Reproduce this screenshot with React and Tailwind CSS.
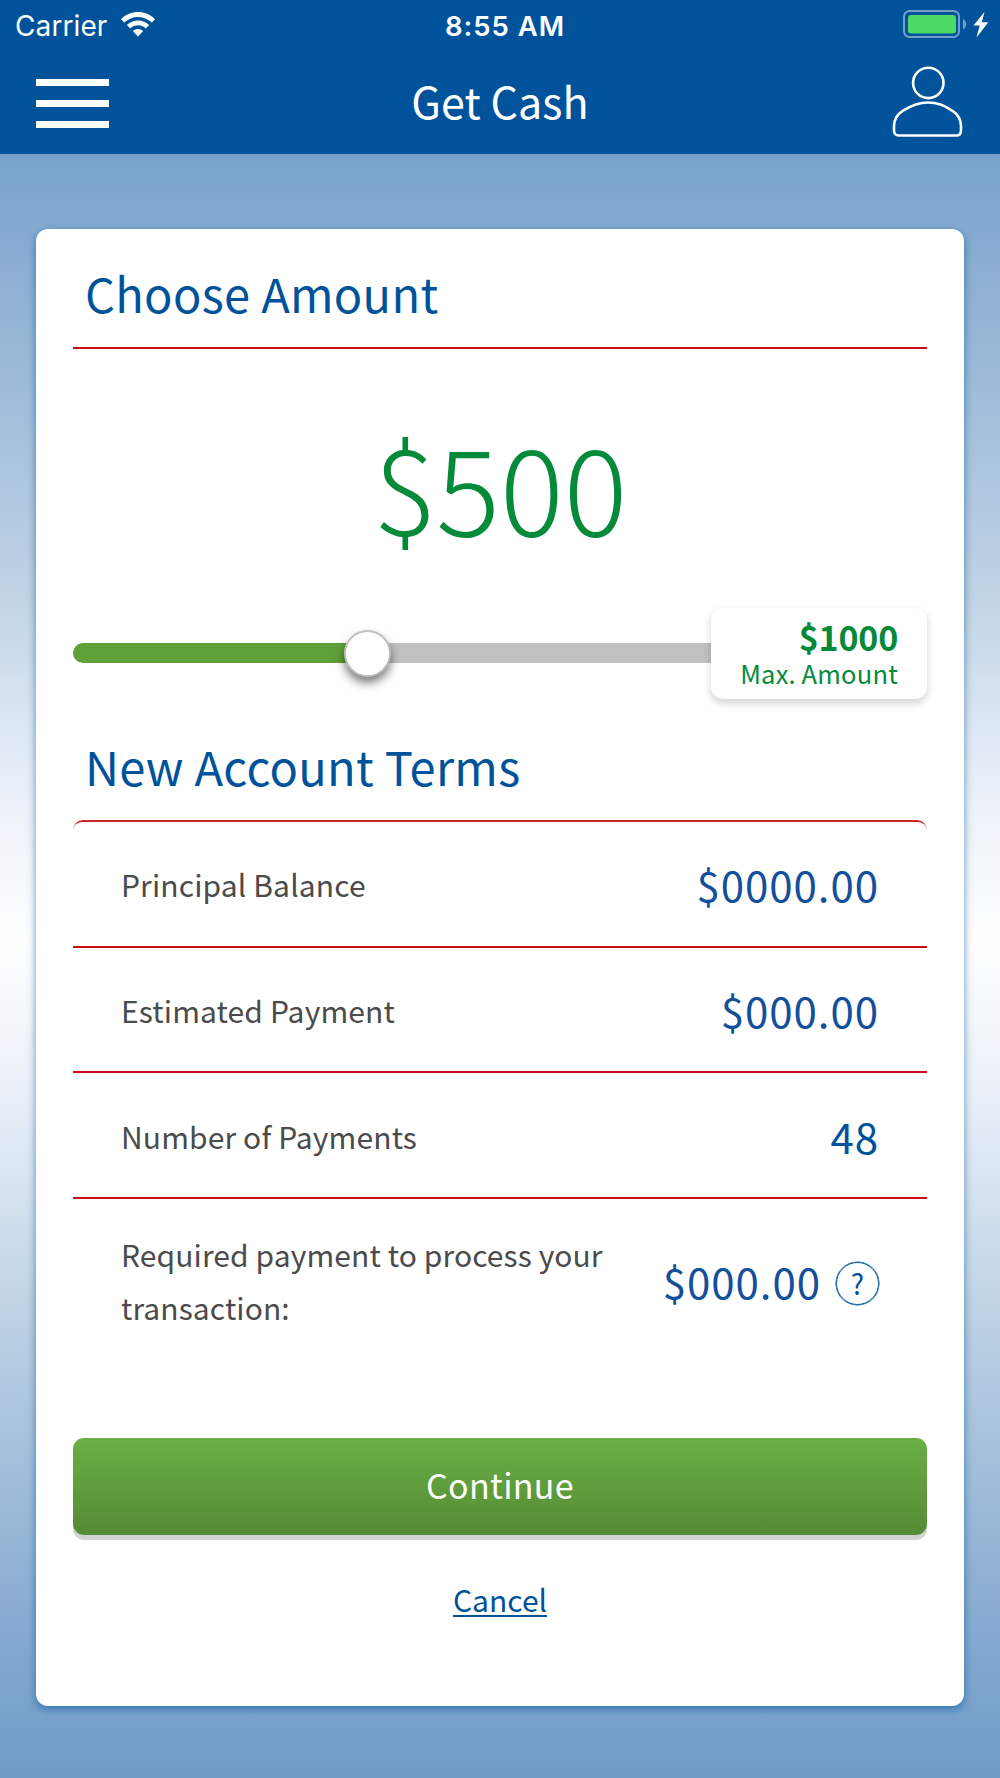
import React, { useState } from 'react';

const terms = [
  { label: 'Principal Balance', value: '$0000.00', color: 'text-[#134f9b]' },
  { label: 'Estimated Payment', value: '$000.00', color: 'text-[#134f9b]' },
  { label: 'Number of Payments', value: '48', color: 'text-[#00539b]' },
];

const StatusBar = () => (
  <div className="h-[50px] flex items-center justify-between pl-[15px] pr-[11px] font-['Inter',sans-serif] text-white">
    <div className="flex-1 flex items-center gap-[14px]">
      <span className="text-[28px] leading-[50px] pt-px tracking-[0.1px]">Carrier</span>
      <svg width="34" height="25" viewBox="0 0 34 25" fill="#fff" className="-mt-[1px]">
        <path d="M0 7.2C9.6-2.4 24.4-2.4 34 7.2l-3.2 3.4C23 3 11 3 3.2 10.6z" />
        <path d="M5.9 13.1C12.2 7 21.8 7 28.1 13.1l-3.3 3.3c-4.5-4.2-11.1-4.2-15.6 0z" />
        <path d="M11.8 19c3-2.7 7.4-2.7 10.4 0L17 24.6z" />
      </svg>
    </div>
    <span className="pl-[6px] pt-px text-[27.5px] leading-[50px] font-semibold tracking-[1px]">8:55 AM</span>
    <div className="flex-1 flex items-center justify-end">
      <svg width="86" height="28" viewBox="0 0 86 28" className="-mt-[2px]">
        <rect x="1" y="1" width="55" height="26" rx="5.5" fill="none" stroke="#fff" strokeOpacity="0.45" strokeWidth="2" />
        <rect x="5" y="5" width="48" height="18.5" rx="3" fill="#4cd964" />
        <path d="M60 9c4.2 2 4.2 8.500 0 10.500z" fill="#fff" fillOpacity="0.45" />
        <path d="M81.500 2L70.500 15.500h6.200L73.500 27.500 85.300 12.300h-6.500z" fill="#fff" />
      </svg>
    </div>
  </div>
);

const NavBar = () => (
  <div className="h-[104px] flex items-start justify-between px-[36px]">
    <button className="mt-[29px] w-[73px] flex flex-col gap-[14px]">
      <span className="h-[7px] w-full bg-white" />
      <span className="h-[7px] w-full bg-white" />
      <span className="h-[7px] w-full bg-white" />
    </button>
    <h1 className="text-[43px] leading-[101px] text-white tracking-[0.1px]">Get Cash</h1>
    <button className="mt-[16px] w-[73px] flex justify-end">
      <svg width="72" height="72" viewBox="0 0 72 72" fill="none" stroke="#fff" strokeWidth="2.6">
        <circle cx="36.3" cy="16.9" r="15.2" />
        <path d="M36 36.500c9 0 17 3 24.200 8.200 5.500 3.600 8.800 8.300 8.800 15.500v4.300c0 3.600-2 5-4.600 5H6.600c-2.600 0-4.600-1.800-4.600-5v-4.300c0-7.200 3.500-11.900 9-15.500 8-5 16-8.200 25-8.200z" />
      </svg>
    </button>
  </div>
);

const App = () => {
  const [amount] = useState(500);

  return (
    <div className="w-[1000px] h-[1778px] overflow-hidden flex flex-col font-['Noto_Sans_CJK_SC',sans-serif] bg-[#00539b]">
      <header className="h-[154px] shrink-0">
        <StatusBar />
        <NavBar />
      </header>

      <main className="flex-1 pt-[75px] px-[36px] bg-[linear-gradient(180deg,#78a2c9_0px,#85aad0_75px,#c0d3e5_440px,#e9eff8_630px,#ffffff_785px,#e9eff8_945px,#bfd3e5_1150px,#86aad0_1475px,#6f9cc7_1624px)]">
        <div className="h-[1477px] px-[37px] rounded-[12px] bg-white shadow-[0_3px_8px_rgba(0,83,155,0.6)]">

          {/* Amount */}
          <h2 className="h-[118px] pt-[24px] pl-[12px] text-[47px] leading-[80px] text-[#00539b] tracking-[0.3px]">Choose Amount</h2>
          <div className="h-[2px] bg-[#cb0f14]" />
          <div className="h-[258px] pt-[35px] text-center text-[119px] leading-[200px] font-light text-[#048a39]">${amount}</div>

          {/* Slider */}
          <div className="h-[92px] flex items-center">
            <div className="h-[20px] w-[295px] rounded-l-full bg-[#5fa038]" />
            <div className="relative -ml-[24px] h-[47px] w-[47px] rounded-full border-2 border-[#bfbfbf] bg-white shadow-[0_6px_10px_rgba(0,0,0,0.5)]" />
            <div className="-ml-[24px] h-[20px] flex-1 bg-[#c0c0c0]" />
            <div className="mt-[1px] h-[91px] w-[216px] pr-[29px] pt-[10px] rounded-[12px] bg-white text-right text-[#048a39] shadow-[0_4px_8px_rgba(0,0,0,0.18)]">
              <div className="h-[38px] text-[34px] leading-[38px] font-bold tracking-[-0.2px]">$1000</div>
              <div className="h-[34px] text-[25.5px] leading-[34px] tracking-[0.2px]">Max. Amount</div>
            </div>
          </div>

          {/* Terms */}
          <h2 className="h-[121px] pt-[27px] pl-[12px] text-[47px] leading-[80px] text-[#00539b] tracking-[0.25px]">New Account Terms</h2>
          <div className="rounded-t-[10px] border-t-2 border-[#cf2327]">
            {terms.map((term) => (
              <div key={term.label} className="h-[125.7px] px-[48px] flex items-center justify-between border-b-2 border-[#cb0f14]">
                <span className="pt-[2px] text-[30px] text-[#4b4b4b] tracking-[0.13px]">{term.label}</span>
                <span className={`text-[42px] tracking-[0.95px] ${term.color}`}>{term.value}</span>
              </div>
            ))}
            <div className="h-[239px] pt-[28px] px-[48px] flex items-start justify-between">
              <p className="w-[500px] pt-[1px] text-[30px] leading-[53px] text-[#4b4b4b] tracking-[0.1px]">Required payment to process your transaction:</p>
              <div className="flex items-center gap-[15px] h-[113px]">
                <span className="pb-[7px] text-[42px] tracking-[0.95px] text-[#134f9b]">$000.00</span>
                <span className="h-[43px] w-[43px] rounded-full border border-[#00539b] shadow-[0_0_0_0.5px_#00539b] flex items-center justify-center text-[28px] leading-[38px] text-[#00539b]">
                  <span className="-mt-[2px]">?</span>
                </span>
              </div>
            </div>
          </div>

          {/* Actions */}
          <button className="block h-[97px] w-full pb-[5px] rounded-[11px] bg-linear-to-b from-[#6aaf45] to-[#558b35] text-[34px] leading-[87px] text-white tracking-[0.3px] shadow-[0_5px_0_#d2d2d2]">Continue</button>
          <div className="pt-[34px] text-center">
            <a className="text-[30px] leading-[60px] text-[#00539b] underline decoration-2 underline-offset-[3px]">Cancel</a>
          </div>
        </div>
      </main>
    </div>
  );
};

export default App;
